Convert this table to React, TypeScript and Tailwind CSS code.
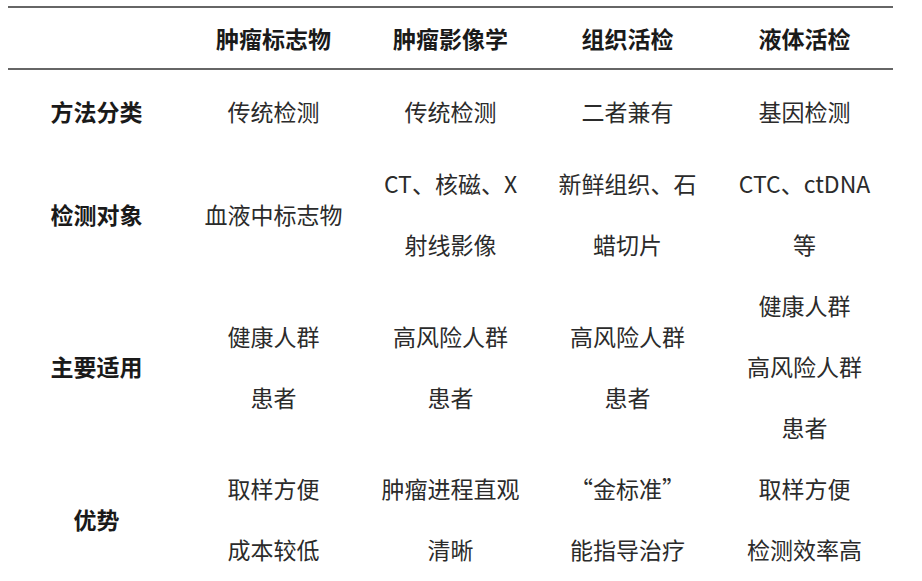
import React from "react";

const cols = ["肿瘤标志物", "肿瘤影像学", "组织活检", "液体活检"];

const rows: { label: string; cells: string[][]; h?: string }[] = [
  {
    label: "方法分类",
    cells: [["传统检测"], ["传统检测"], ["二者兼有"], ["基因检测"]],
    h: "h-[83px]",
  },
  {
    label: "检测对象",
    cells: [["血液中标志物"], ["CT、核磁、X", "射线影像"], ["新鲜组织、石", "蜡切片"], ["CTC、ctDNA", "等"]],
  },
  {
    label: "主要适用",
    cells: [["健康人群", "患者"], ["高风险人群", "患者"], ["高风险人群", "患者"], ["健康人群", "高风险人群", "患者"]],
  },
  {
    label: "优势",
    cells: [["取样方便", "成本较低"], ["肿瘤进程直观", "清晰"], ["“金标准”", "能指导治疗"], ["取样方便", "检测效率高"]],
  },
];

export default function App() {
  return (
    <div
      className="w-[922px] h-[581px] bg-white overflow-hidden pt-[6px] pl-[8px]"
      style={{ fontFamily: '"Noto Sans CJK SC", "Noto Sans", sans-serif' }}
    >
      <div className="w-[885px]">
        <div className="grid grid-cols-5 h-[64px] border-t-2 border-b-2 border-[#666666] items-center text-[23px] font-bold text-[#1a1a1a]">
          <div />
          {cols.map((c) => (
            <div key={c} className="text-center leading-none">
              {c}
            </div>
          ))}
        </div>
        {rows.map((r) => (
          <div key={r.label} className={`grid grid-cols-5 items-center ${r.h ?? ""}`}>
            <div className="text-center text-[23px] font-bold text-[#1a1a1a] leading-[61px]">{r.label}</div>
            {r.cells.map((lines, i) => (
              <div key={i} className="flex flex-col items-center text-[23px] text-[#2b2b2b] leading-[61px]">
                {lines.map((l, j) => (
                  <div key={j} className="whitespace-nowrap">
                    {l}
                  </div>
                ))}
              </div>
            ))}
          </div>
        ))}
      </div>
    </div>
  );
}
